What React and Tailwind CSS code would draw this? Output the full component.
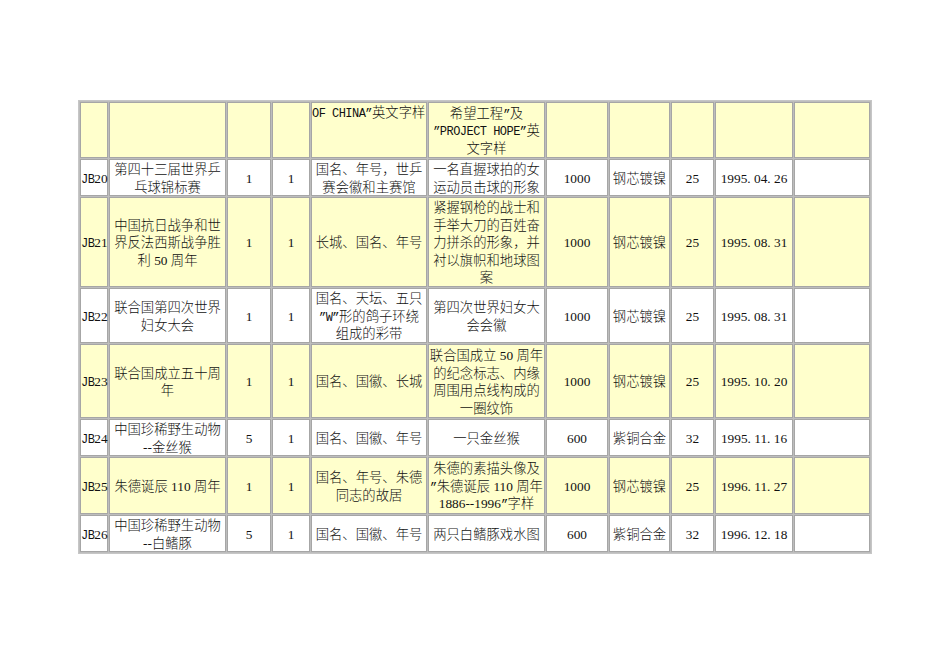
import React from 'react';

const widths = [
  'w-[28px]', 'w-[117px]', 'w-[44px]', 'w-[38px]', 'w-[116px]', 'w-[117px]',
  'w-[62px]', 'w-[61px]', 'w-[43px]', 'w-[78px]', 'w-[76px]'
];

const rows = [
  {
    yellow: true,
    h: 'h-[56px]',
    cells: ['', '', '', '', ['OF CHINA”英文字样'], ['希望工程”及', '”PROJECT HOPE”英', '文字样'], '', '', '', '', '']
  },
  {
    yellow: false,
    h: 'h-[37px]',
    cells: ['JB20', ['第四十三届世界乒', '乓球锦标赛'], '1', '1', ['国名、年号，世乒', '赛会徽和主赛馆'], ['一名直握球拍的女', '运动员击球的形象'], '1000', '钢芯镀镍', '25', '1995.04.26', '']
  },
  {
    yellow: true,
    h: 'h-[90px]',
    cells: ['JB21', ['中国抗日战争和世', '界反法西斯战争胜', '利 50 周年'], '1', '1', ['长城、国名、年号'], ['紧握钢枪的战士和', '手举大刀的百姓奋', '力拼杀的形象，并', '衬以旗帜和地球图', '案'], '1000', '钢芯镀镍', '25', '1995.08.31', '']
  },
  {
    yellow: false,
    h: 'h-[55px]',
    cells: ['JB22', ['联合国第四次世界', '妇女大会'], '1', '1', ['国名、天坛、五只', '”W”形的鸽子环绕', '组成的彩带'], ['第四次世界妇女大', '会会徽'], '1000', '钢芯镀镍', '25', '1995.08.31', '']
  },
  {
    yellow: true,
    h: 'h-[74px]',
    cells: ['JB23', ['联合国成立五十周', '年'], '1', '1', ['国名、国徽、长城'], ['联合国成立 50 周年', '的纪念标志、内缘', '周围用点线构成的', '一圈纹饰'], '1000', '钢芯镀镍', '25', '1995.10.20', '']
  },
  {
    yellow: false,
    h: 'h-[37px]',
    cells: ['JB24', ['中国珍稀野生动物', '--金丝猴'], '5', '1', ['国名、国徽、年号'], ['一只金丝猴'], '600', '紫铜合金', '32', '1995.11.16', '']
  },
  {
    yellow: true,
    h: 'h-[57px]',
    cells: ['JB25', ['朱德诞辰 110 周年'], '1', '1', ['国名、年号、朱德', '同志的故居'], ['朱德的素描头像及', '”朱德诞辰 110 周年', '1886--1996”字样'], '1000', '钢芯镀镍', '25', '1996.11.27', '']
  },
  {
    yellow: false,
    h: 'h-[36px]',
    cells: ['JB26', ['中国珍稀野生动物', '--白鳍豚'], '5', '1', ['国名、国徽、年号'], ['两只白鳍豚戏水图'], '600', '紫铜合金', '32', '1996.12.18', '']
  }
];

const latin = /^[A-Za-z”]+(?: [A-Za-z”]+)*$/;
const numeric = /^[0-9. \-]+$/;

// digits in the serif (dots padded to a half-width cell), latin letters and quotes in a tightened mono
function Line({ text }) {
  const parts = text.split(/([A-Za-z”]+(?: [A-Za-z”]+)*|[0-9. \-]+)/).filter(Boolean);
  return (
    <div className="h-[17.5px] whitespace-nowrap">
      {parts.map((p, i) => {
        if (latin.test(p)) {
          return <span key={i} className="font-['Liberation_Mono',monospace] text-[12px] tracking-[-0.53px]">{p}</span>;
        }
        if (numeric.test(p)) {
          return (
            <span key={i} className="font-['Liberation_Serif',serif] text-[13.33px]">
              {p.split(/(\.)/).map((q, j) =>
                q === '.' ? <span key={j} className="pr-[3.3px]">.</span> : q
              )}
            </span>
          );
        }
        return <span key={i}>{p}</span>;
      })}
    </div>
  );
}

export default function App() {
  return (
    <div className="min-h-[672px] w-[950px] bg-white pt-[100px] pl-[78px]">
      <table className="table-fixed w-[794px] border-separate border-spacing-[1px] border border-[#c6c6c6] bg-[#bdbdbd] font-['Noto_Sans_CJK_SC',sans-serif] font-light text-[13.33px] leading-[17.5px] text-[#111]">
        <tbody>
          {rows.map((row, r) => (
            <tr key={r} className={row.h}>
              {row.cells.map((cell, c) => {
                const lines = Array.isArray(cell) ? cell : cell ? [cell] : [];
                const topLeft = r === 0 && c === 4;
                return (
                  <td
                    key={c}
                    className={[
                      r === 0 ? widths[c] : '',
                      'p-0 border border-[#a6a6a6]',
                      row.yellow ? 'bg-[#ffffcc]' : 'bg-white',
                      topLeft ? 'align-top text-left' : 'align-middle',
                      c === 0 ? 'text-left' : topLeft ? '' : 'text-center'
                    ].join(' ')}
                  >
                    {lines.map((t, i) => (
                      <Line key={i} text={t} />
                    ))}
                  </td>
                );
              })}
            </tr>
          ))}
        </tbody>
      </table>
    </div>
  );
}
